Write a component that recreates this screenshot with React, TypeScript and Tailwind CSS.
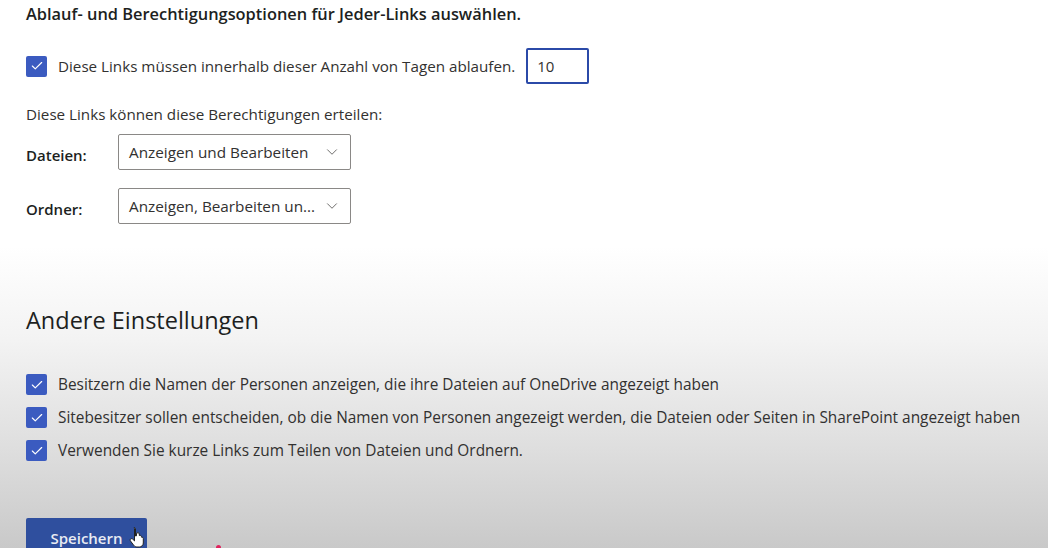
import { ChevronDown, Check } from 'lucide-react';

const FONT = { fontFamily: '"Open Sans", "Noto Sans", sans-serif' };

function Box({ label }: { label: string }) {
  return (
    <label className="flex items-center gap-[11px]">
      <span className="w-[21px] h-[21px] rounded-[2px] bg-[#3b5bc0] flex items-center justify-center shrink-0">
        <Check className="w-[14px] h-[14px] text-white" strokeWidth={2} />
      </span>
      <span className="text-[15.4px] text-[#323130] leading-5 whitespace-nowrap">{label}</span>
    </label>
  );
}

function Select({ value }: { value: string }) {
  return (
    <div className="w-[233px] h-[36px] border border-[#8a8886] rounded-[2px] bg-white flex items-center justify-between pl-[10px] pr-[9px]">
      <span className="text-[15.3px] text-[#323130] whitespace-nowrap">{value}</span>
      <ChevronDown className="w-[18px] h-[18px] text-[#605e5c]" strokeWidth={1.2} />
    </div>
  );
}

export default function App() {
  return (
    <div
      className="relative w-[1048px] h-[548px] overflow-hidden bg-[linear-gradient(180deg,#ffffff_0%,#ffffff_45%,#f3f3f3_62%,#dedede_82%,#c9c9c9_100%)] pl-[26px]"
      style={FONT}
    >
      <h2 className="pt-[4px] text-[16.4px] font-semibold text-[#201f1e] leading-5">
        Ablauf- und Berechtigungsoptionen für Jeder-Links auswählen.
      </h2>

      <div className="mt-[24px] flex items-center gap-[11px]">
        <span className="w-[21px] h-[21px] rounded-[2px] bg-[#3b5bc0] flex items-center justify-center">
          <Check className="w-[14px] h-[14px] text-white" strokeWidth={2} />
        </span>
        <span className="text-[15.2px] text-[#323130]">Diese Links müssen innerhalb dieser Anzahl von Tagen ablaufen.</span>
        <div className="w-[63px] h-[36px] border-2 border-[#2b4aa8] rounded-[2px] bg-white flex items-center pl-[9px] text-[15px] text-[#323130]">
          10
        </div>
      </div>

      <p className="mt-[20px] text-[15.2px] text-[#323130] leading-5">Diese Links können diese Berechtigungen erteilen:</p>

      <div className="mt-[10px] flex flex-col gap-[18px]">
        <div className="flex items-center">
          <span className="w-[92px] text-[15px] font-semibold text-[#201f1e] pt-[6px]">Dateien:</span>
          <Select value="Anzeigen und Bearbeiten" />
        </div>
        <div className="flex items-center">
          <span className="w-[92px] text-[15px] font-semibold text-[#201f1e] pt-[6px]">Ordner:</span>
          <Select value="Anzeigen, Bearbeiten un..." />
        </div>
      </div>

      <h2 className="mt-[82px] text-[23.5px] text-[#201f1e] leading-7">Andere Einstellungen</h2>

      <div className="mt-[40px] flex flex-col gap-[12px]">
        <Box label="Besitzern die Namen der Personen anzeigen, die ihre Dateien auf OneDrive angezeigt haben" />
        <Box label="Sitebesitzer sollen entscheiden, ob die Namen von Personen angezeigt werden, die Dateien oder Seiten in SharePoint angezeigt haben" />
        <Box label="Verwenden Sie kurze Links zum Teilen von Dateien und Ordnern." />
      </div>

      <div className="mt-[57px] relative w-[121px] h-[40px] bg-[#2f4f9e] rounded-[2px] flex items-start justify-center pt-[9px]">
        <span className="text-[15px] font-semibold text-[#e8ebf3]">Speichern</span>
        <svg className="absolute left-[103px] top-[8px]" width="18" height="22" viewBox="0 0 18 22">
          <path
            d="M5 1.5c.9 0 1.5.6 1.5 1.5v7l1-.2V8c0-.8.6-1.4 1.4-1.4s1.4.6 1.4 1.4v1.5l.6-.1c.8-.1 1.4.5 1.5 1.2v.6l.5-.1c.8 0 1.4.6 1.4 1.4V17c0 2.2-1.8 4-4 4H8c-1.3 0-2.4-.6-3.2-1.6L1.5 15c-.5-.7-.4-1.6.3-2.1.6-.4 1.4-.3 1.9.2l1.8 1.8V3c0-.9-.4-1.5-.5-1.5z"
            fill="#fff"
            stroke="#222"
            strokeWidth="1"
          />
        </svg>
      </div>
      <span className="absolute left-[216px] top-[545px] w-[5px] h-[5px] rounded-full bg-[#e0245e]" />
    </div>
  );
}
